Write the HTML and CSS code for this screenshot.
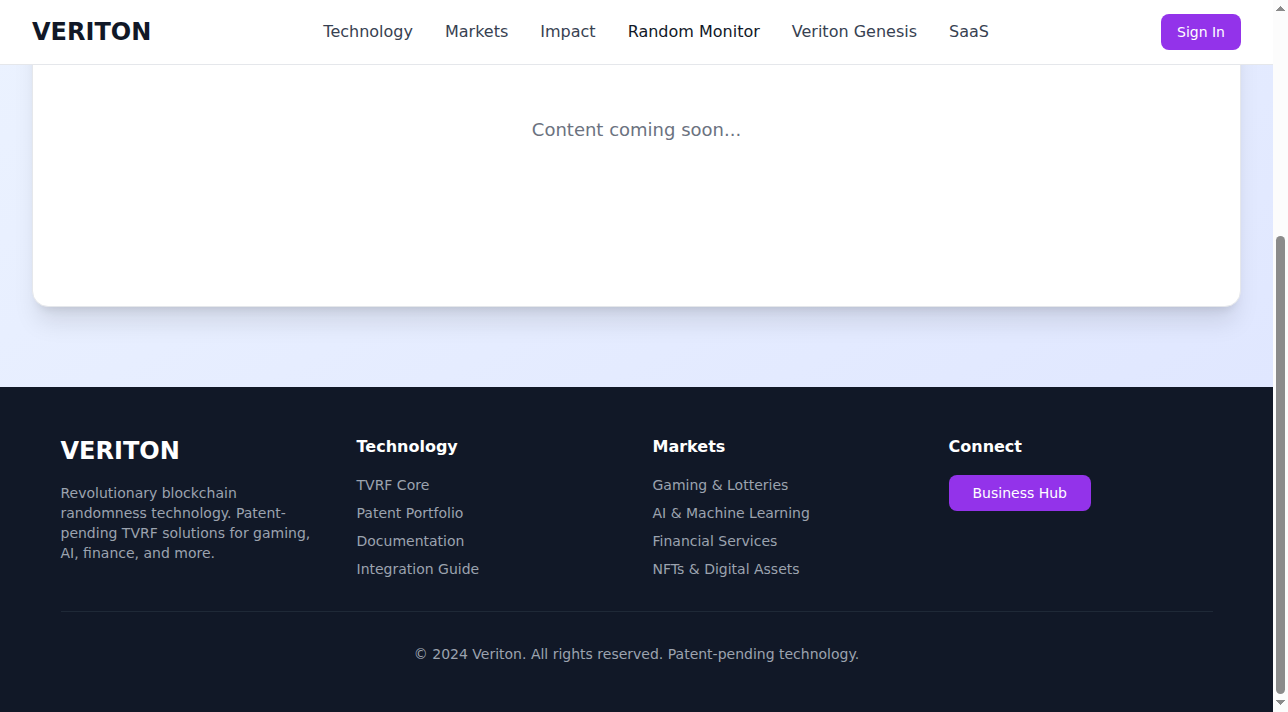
FILE: index.html
```html
<!DOCTYPE html>
<html lang="en">
<head>
  <meta charset="utf-8">
  <meta name="viewport" content="width=device-width, initial-scale=1">
  <title>Veriton</title>
  <link rel="stylesheet" href="styles.css">
</head>
<body>
  <div class="page">
    <header class="header">
      <a class="logo" href="#">VERITON</a>
      <nav class="nav" aria-label="Main">
        <a href="#">Technology</a>
        <a href="#">Markets</a>
        <a href="#">Impact</a>
        <a class="active" href="#" aria-current="page">Random Monitor</a>
        <a href="#">Veriton Genesis</a>
        <a href="#">SaaS</a>
      </nav>
      <button class="button" type="button">Sign In</button>
    </header>
    <main class="main">
      <section class="card">
        <p>Content coming soon...</p>
      </section>
    </main>
    <footer class="footer">
      <div class="footer-inner">
        <div class="columns">
          <div>
            <div class="footer-logo">VERITON</div>
            <p class="about">Revolutionary blockchain randomness technology. Patent-pending TVRF solutions for gaming, AI, finance, and more.</p>
          </div>
          <div>
            <h4>Technology</h4>
            <ul>
              <li><a href="#">TVRF Core</a></li>
              <li><a href="#">Patent Portfolio</a></li>
              <li><a href="#">Documentation</a></li>
              <li><a href="#">Integration Guide</a></li>
            </ul>
          </div>
          <div>
            <h4>Markets</h4>
            <ul>
              <li><a href="#">Gaming &amp; Lotteries</a></li>
              <li><a href="#">AI &amp; Machine Learning</a></li>
              <li><a href="#">Financial Services</a></li>
              <li><a href="#">NFTs &amp; Digital Assets</a></li>
            </ul>
          </div>
          <div>
            <h4>Connect</h4>
            <button class="button button-wide" type="button">Business Hub</button>
          </div>
        </div>
        <p class="copyright">© 2024 Veriton. All rights reserved. Patent-pending technology.</p>
      </div>
    </footer>
  </div>
  <div class="scrollbar" aria-hidden="true">
    <svg class="arrow" viewBox="0 0 9 5"><path d="M4 0h1v1h1v1h1v1h1v1h1v1H0V4h1V3h1V2h1V1h1z"/></svg>
    <div class="track"><div class="thumb"></div></div>
    <svg class="arrow" viewBox="0 0 9 5"><path d="M0 0h9v1H8v1H7v1H6v1H5v1H4V4H3V3H2V2H1V1H0z"/></svg>
  </div>
</body>
</html>
```
FILE: styles.css
```css
* {
  box-sizing: border-box;
  margin: 0;
  padding: 0;
}

body {
  display: flex;
  min-height: 100vh;
  font-family: "DejaVu Sans", sans-serif;
  font-size: 16px;
  line-height: 24px;
  color: #111827;
}

a {
  color: inherit;
  text-decoration: none;
}

ul {
  list-style: none;
}

.page {
  flex: 1;
  min-width: 0;
  display: flex;
  flex-direction: column;
}

.header {
  display: flex;
  align-items: center;
  justify-content: space-between;
  min-height: 65px;
  padding: 0 32px;
  background: #ffffff;
  border-bottom: 1px solid #e5e7eb;
}

.logo,
.footer-logo {
  font-size: 24px;
  line-height: 32px;
  font-weight: 700;
}

.nav {
  display: flex;
  gap: 32px;
  color: #374151;
}

.nav .active {
  color: #111827;
}

.button {
  height: 36px;
  padding: 0 16px;
  border: 0;
  border-radius: 8px;
  background: #9333ea;
  color: #ffffff;
  font: inherit;
  font-size: 14px;
  line-height: 20px;
  cursor: pointer;
}

.button-wide {
  padding: 0 24px;
}

.main {
  flex: 1;
  padding: 0 32px 80px;
  background: linear-gradient(to bottom right, #eff6ff, #e0e7ff) bottom / 100% 738px;
  overflow: hidden;
}

/* The card's top edge runs on behind the header. */
.card {
  margin-top: -80px;
  padding: 130px 32px 162px;
  background: #ffffff;
  border: 1px solid #e5e7eb;
  border-radius: 16px;
  box-shadow: 0 20px 25px -5px rgba(0, 0, 0, 0.1), 0 8px 10px -6px rgba(0, 0, 0, 0.1);
  color: #6b7280;
  font-size: 18px;
  line-height: 28px;
  text-align: center;
}

.footer {
  padding: 48px 32px;
  background: #111827;
  color: #9ca3af;
  font-size: 14px;
  line-height: 20px;
}

.footer-inner {
  max-width: 1152px;
  margin: 0 auto;
}

.columns {
  display: grid;
  grid-template-columns: repeat(4, 1fr);
  gap: 32px;
}

.footer-logo {
  margin-bottom: 16px;
  color: #ffffff;
}

h4 {
  margin-bottom: 16px;
  color: #ffffff;
  font-size: 16px;
  line-height: 24px;
  font-weight: 600;
}

li + li {
  margin-top: 8px;
}

.copyright {
  margin-top: 32px;
  padding-top: 32px;
  border-top: 1px solid #1f2937;
  text-align: center;
}

.scrollbar {
  flex: none;
  display: flex;
  flex-direction: column;
  align-items: center;
  gap: 6px;
  width: 15px;
  height: 100vh;
  padding: 6px 0 7px;
  background: #fcfcfc;
}

.arrow {
  width: 9px;
  height: 5px;
  fill: #8b8b8b;
  shape-rendering: crispEdges;
}

.track {
  flex: 1;
  display: flex;
  flex-direction: column;
  justify-content: flex-end;
}

.thumb {
  width: 9px;
  height: 67.6%;
  border-radius: 5px;
  background: #8b8b8b;
}
```
